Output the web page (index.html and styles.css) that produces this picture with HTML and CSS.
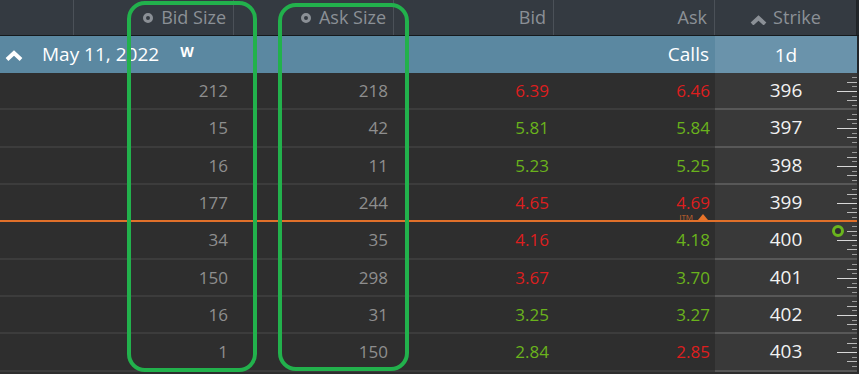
FILE: index.html
```html
<!DOCTYPE html>
<html>
<head>
<meta charset="utf-8">
<link rel="stylesheet" href="styles.css">
</head>
<body>
<div class="chain">
  <div class="head">
    <div class="hc"></div>
    <div class="hc"><span class="ring"></span>Bid Size</div>
    <div class="hc"><span class="ring"></span>Ask Size</div>
    <div class="hc">Bid</div>
    <div class="hc">Ask</div>
    <div class="hc hc-strike"><svg class="caret-h" width="17" height="10" viewBox="0 0 17 10"><polyline points="2,9 8.5,3 15,9" fill="none" stroke="#8b9096" stroke-width="4"/></svg>Strike</div>
    <div class="edge"></div>
  </div>
  <div class="group">
    <div class="g-main">
      <svg class="caret" width="18" height="11" viewBox="0 0 18 11"><polyline points="2,9.5 9,3 16,9.5" fill="none" stroke="#ffffff" stroke-width="4"/></svg>
      <span class="g-date">May 11, 2022</span>
      <span class="g-w">W</span>
      <span class="g-calls">Calls</span>
    </div>
    <div class="g-strike">1d</div>
    <div class="edge"></div>
  </div>

  <div class="row"><div class="c"></div><div class="c sz">212</div><div class="c sz">218</div><div class="c px red">6.39</div><div class="c px red">6.46</div><div class="c st">396</div><div class="edge"></div></div>
  <div class="row"><div class="c"></div><div class="c sz">15</div><div class="c sz">42</div><div class="c px grn">5.81</div><div class="c px grn">5.84</div><div class="c st">397</div><div class="edge"></div></div>
  <div class="row"><div class="c"></div><div class="c sz">16</div><div class="c sz">11</div><div class="c px grn">5.23</div><div class="c px grn">5.25</div><div class="c st">398</div><div class="edge"></div></div>
  <div class="row row-itm"><div class="c"></div><div class="c sz">177</div><div class="c sz">244</div><div class="c px red">4.65</div><div class="c px red ask-itm">4.69<span class="itm"><span class="itm-t">ITM</span><span class="itm-tri"></span></span></div><div class="c st">399</div><div class="edge"></div></div>
  <div class="row"><div class="c"></div><div class="c sz">34</div><div class="c sz">35</div><div class="c px red">4.16</div><div class="c px grn">4.18</div><div class="c st st-cur">400<span class="cur-ring"></span></div><div class="edge"></div></div>
  <div class="row"><div class="c"></div><div class="c sz">150</div><div class="c sz">298</div><div class="c px red">3.67</div><div class="c px grn">3.70</div><div class="c st">401</div><div class="edge"></div></div>
  <div class="row"><div class="c"></div><div class="c sz">16</div><div class="c sz">31</div><div class="c px grn">3.25</div><div class="c px grn">3.27</div><div class="c st">402</div><div class="edge"></div></div>
  <div class="row"><div class="c"></div><div class="c sz">1</div><div class="c sz">150</div><div class="c px grn">2.84</div><div class="c px red">2.85</div><div class="c st">403</div><div class="edge"></div></div>

  <div class="box box-bid"></div>
  <div class="box box-ask"></div>
</div>
</body>
</html>
```

FILE: styles.css
```css
* { box-sizing: border-box; }
html, body { margin: 0; padding: 0; }
body {
  background: #2e2e2e;
  width: 859px;
  height: 374px;
  overflow: hidden;
  font-family: "Open Sans", "Noto Sans", sans-serif;
}
.chain {
  position: relative;
  width: 859px;
  height: 374px;
  overflow: hidden;
}
.head {
  display: grid;
  grid-template-columns: 74px 160px 160px 160px 161px 142px 2px;
  height: 36px;
  background: #343a41;
  border-bottom: 1px solid #15191c;
}
.hc {
  display: flex;
  align-items: center;
  justify-content: flex-end;
  padding-right: 7px;
  padding-top: 1px;
  border-right: 1px solid #4b5158;
  color: #8b9096;
  font-size: 18px;
  line-height: 1.1;
}
.hc-strike {
  justify-content: center;
  padding-right: 0;
  gap: 6px;
  border-right: 1px solid #1f2327;
}
.caret-h { margin-top: 3px; }
.ring {
  width: 10px;
  height: 10px;
  border: 3px solid #8b9096;
  border-radius: 50%;
  margin-right: 8px;
  margin-top: -1px;
}
.edge { background: #22262a; }

.group {
  display: grid;
  grid-template-columns: 715px 142px 2px;
  height: 37px;
  color: #ffffff;
}
.g-main {
  display: flex;
  align-items: center;
  background: #5b88a1;
  padding-left: 5px;
  padding-right: 6px;
  line-height: 1.1;
}
.caret { margin-top: 2px; }
.g-date { font-size: 19px; margin-left: 19px; }
.g-w { font-size: 14px; font-weight: 700; margin-left: 21px; margin-top: -5px; }
.g-calls { font-size: 19px; margin-left: auto; }
.g-strike {
  display: flex;
  align-items: center;
  justify-content: center;
  background: #6a93ab;
  font-size: 19px;
}

.row {
  display: grid;
  grid-template-columns: 74px 160px 160px 160px 161px 142px 2px;
  height: 37.33px;
}
.c {
  display: flex;
  align-items: center;
  justify-content: flex-end;
  padding-right: 6px;
  border-bottom: 2px solid #3c3c3c;
  font-size: 17px;
  line-height: 1;
}
.sz { color: #8e8e8e; }
.px { padding-right: 5px; }
.red { color: #dd1e1e; }
.grn { color: #6ab31c; }
.st {
  justify-content: center;
  padding-right: 0;
  color: #f2f2f2;
  font-size: 19px;
  border-bottom-color: #585858;
  background:
    linear-gradient(#9c9c9c, #9c9c9c) right 0 top 4px / 5px 1px no-repeat,
    linear-gradient(#bcbcbc, #bcbcbc) right 0 top 9px / 10px 1px no-repeat,
    linear-gradient(#9c9c9c, #9c9c9c) right 0 top 13px / 5px 1px no-repeat,
    linear-gradient(#d8d8d8, #d8d8d8) right 0 top 18px / 20px 1px no-repeat,
    linear-gradient(#9c9c9c, #9c9c9c) right 0 top 23px / 5px 1px no-repeat,
    linear-gradient(#bcbcbc, #bcbcbc) right 0 top 27px / 10px 1px no-repeat,
    linear-gradient(#9c9c9c, #9c9c9c) right 0 top 32px / 5px 1px no-repeat,
    #393939;
}
.row .edge { background: #2a2a2a; }
.row-itm .c { border-bottom-color: #e0702a; }

.ask-itm { position: relative; }
.itm {
  position: absolute;
  right: 7px;
  bottom: 0;
  display: flex;
  align-items: flex-end;
  gap: 5px;
}
.itm-t {
  font-size: 8px;
  line-height: 7px;
  color: #c8642c;
}
.itm-tri {
  width: 0;
  height: 0;
  border-left: 5.5px solid transparent;
  border-right: 5.5px solid transparent;
  border-bottom: 6px solid #e8742a;
}
.st-cur { position: relative; }
.cur-ring {
  position: absolute;
  left: 117px;
  top: 3px;
  width: 12px;
  height: 12px;
  border: 3.5px solid #6ab51d;
  border-radius: 50%;
  background: #2e2e2e;
}

.box {
  position: absolute;
  border: 4px solid #22b14c;
  border-radius: 18px;
}
.box-bid { left: 127px; top: 1px; width: 130px; height: 371px; }
.box-ask { left: 278px; top: 3px; width: 131px; height: 368px; }
```
